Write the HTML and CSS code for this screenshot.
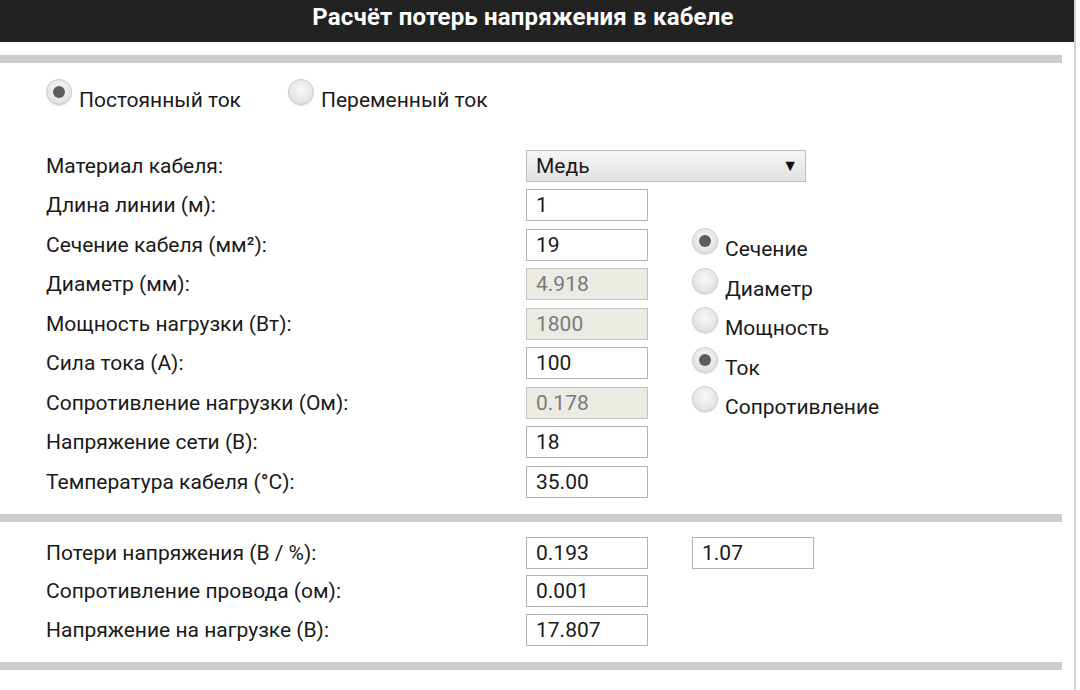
FILE: index.html
```html
<!DOCTYPE html>
<html lang="ru">
<head>
    <meta charset="UTF-8">
    <meta name="viewport" content="width=device-width, initial-scale=1.0">
    <title>Расчёт потерь напряжения в кабеле</title>
    <link rel="stylesheet" href="styles.css">
</head>
<body>
<div class="page">
    <div class="header">
        <h1>Расчёт потерь напряжения в кабеле</h1>
    </div>

    <div class="sep"></div>

    <div class="mode">
        <label class="opt"><span class="radio on"></span><span class="opt-text">Постоянный ток</span></label>
        <label class="opt"><span class="radio"></span><span class="opt-text">Переменный ток</span></label>
    </div>

    <div class="form">
        <div class="row">
            <span class="lbl">Материал кабеля:</span>
            <div class="select"><span>Медь</span><span class="arrow">▼</span></div>
        </div>
        <div class="row">
            <span class="lbl">Длина линии (м):</span>
            <input class="field" type="text" value="1">
        </div>
        <div class="row">
            <span class="lbl">Сечение кабеля (мм²):</span>
            <input class="field" type="text" value="19">
            <label class="opt side"><span class="radio on"></span><span class="opt-text">Сечение</span></label>
        </div>
        <div class="row">
            <span class="lbl">Диаметр (мм):</span>
            <input class="field" type="text" value="4.918" disabled>
            <label class="opt side"><span class="radio"></span><span class="opt-text">Диаметр</span></label>
        </div>
        <div class="row">
            <span class="lbl">Мощность нагрузки (Вт):</span>
            <input class="field" type="text" value="1800" disabled>
            <label class="opt side"><span class="radio"></span><span class="opt-text">Мощность</span></label>
        </div>
        <div class="row">
            <span class="lbl">Сила тока (А):</span>
            <input class="field" type="text" value="100">
            <label class="opt side"><span class="radio on"></span><span class="opt-text">Ток</span></label>
        </div>
        <div class="row">
            <span class="lbl">Сопротивление нагрузки (Ом):</span>
            <input class="field" type="text" value="0.178" disabled>
            <label class="opt side"><span class="radio"></span><span class="opt-text">Сопротивление</span></label>
        </div>
        <div class="row">
            <span class="lbl">Напряжение сети (В):</span>
            <input class="field" type="text" value="18">
        </div>
        <div class="row">
            <span class="lbl">Температура кабеля (°C):</span>
            <input class="field" type="text" value="35.00">
        </div>
    </div>

    <div class="sep sep-mid"></div>

    <div class="form result">
        <div class="row">
            <span class="lbl">Потери напряжения (В / %):</span>
            <input class="field" type="text" value="0.193">
            <input class="field side-field" type="text" value="1.07">
        </div>
        <div class="row">
            <span class="lbl">Сопротивление провода (ом):</span>
            <input class="field" type="text" value="0.001">
        </div>
        <div class="row">
            <span class="lbl">Напряжение на нагрузке (В):</span>
            <input class="field" type="text" value="17.807">
        </div>
    </div>

    <div class="sep sep-bottom"></div>
</div>
</body>
</html>
```

FILE: styles.css
```css
body {
    margin: 0;
    background: #fff;
    font-family: Roboto, "Noto Sans", sans-serif;
    color: #1a1a1a;
}

.page {
    width: 1074px;
    min-height: 690px;
    border-right: 2px solid #d2d2d2;
}

.header {
    background: #222;
    height: 42px;
    padding-right: 28px;
    text-align: center;
}

.header h1 {
    margin: 0;
    color: #fff;
    font-size: 24px;
    font-weight: bold;
    line-height: 35px;
    letter-spacing: 0.2px;
}

.sep {
    height: 8px;
    background: #cdcdcd;
    margin-top: 13px;
    margin-right: 12px;
}

.sep-mid {
    margin-top: 12px;
}

.sep-bottom {
    margin-top: 13px;
}

.mode {
    display: flex;
    gap: 47px;
    padding-left: 46px;
    margin-top: 16px;
}

.opt {
    display: flex;
    align-items: flex-start;
    gap: 7px;
    font-size: 21px;
}

.opt-text {
    line-height: 24px;
    margin-top: 9px;
}

.radio {
    width: 26px;
    height: 26px;
    box-sizing: border-box;
    border-radius: 50%;
    border: 1px solid #c9c9c9;
    background: radial-gradient(circle at 50% 40%, #f8f8f8 0%, #e6e6e6 60%, #d4d4d4 100%);
    box-shadow: 0 1px 1px rgba(0, 0, 0, 0.12);
    display: flex;
    align-items: center;
    justify-content: center;
}

.radio.on::after {
    content: "";
    width: 12px;
    height: 12px;
    border-radius: 50%;
    background: #5e5e5e;
}

.form {
    padding-left: 46px;
    margin-top: 34px;
}

.result {
    margin-top: 12px;
}

.row {
    display: flex;
    align-items: center;
    height: 39.5px;
}

.result .row {
    height: 38.5px;
}

.lbl {
    width: 480px;
    font-size: 21px;
}

.field {
    width: 122px;
    height: 32px;
    box-sizing: border-box;
    border: 1px solid #b4b4b4;
    padding: 0 9px;
    font-family: Roboto, "Noto Sans", sans-serif;
    font-size: 21px;
    color: #1a1a1a;
    background: #fff;
    outline: none;
}

.field:disabled {
    background: #ebebe4;
    color: #7a7a7a;
    border-color: #c4c4bc;
}

.side {
    margin-left: 44px;
}

.side-field {
    margin-left: 44px;
}

.select {
    width: 280px;
    height: 32px;
    box-sizing: border-box;
    border: 1px solid #bdbdbd;
    background: linear-gradient(#f6f6f6, #e2e2e2);
    display: flex;
    align-items: center;
    justify-content: space-between;
    padding: 0 7px 0 9px;
    font-size: 21px;
}

.select .arrow {
    font-size: 16px;
    color: #111;
}
```
